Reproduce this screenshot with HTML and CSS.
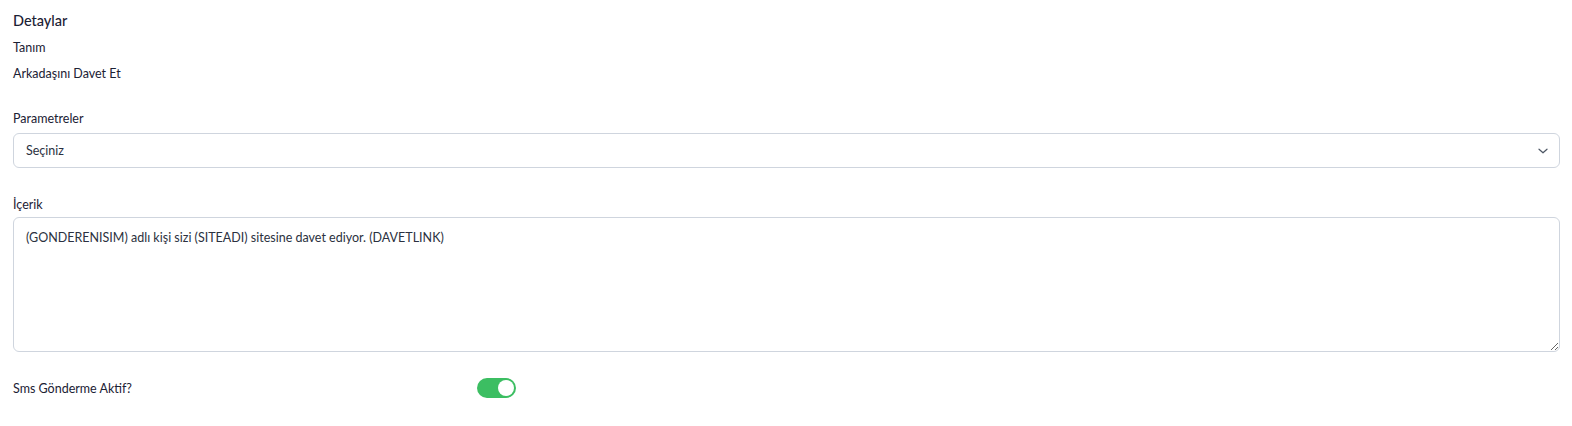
FILE: index.html
```html
<!DOCTYPE html>
<html lang="tr">
<head>
<meta charset="utf-8">
<title>Detaylar</title>
<link rel="stylesheet" href="styles.css">
</head>
<body>
<div class="page">
  <h2 class="title">Detaylar</h2>
  <div class="field-static">
    <div class="label">Tanım</div>
    <div class="value">Arkadaşını Davet Et</div>
  </div>
  <div class="field">
    <label class="label">Parametreler</label>
    <div class="select">
      <span>Seçiniz</span>
      <svg class="chev" width="12" height="12" viewBox="0 0 12 12"><path d="M2 4.2 L6 7.8 L10 4.2" fill="none" stroke="#4b5563" stroke-width="1.2" stroke-linecap="round" stroke-linejoin="round"/></svg>
    </div>
  </div>
  <div class="field field-text">
    <label class="label">İçerik</label>
    <textarea class="textarea">(GONDERENISIM) adlı kişi sizi (SITEADI) sitesine davet ediyor. (DAVETLINK)</textarea>
  </div>
  <div class="toggle-row">
    <span class="label">Sms Gönderme Aktif?</span>
    <span class="toggle"><span class="knob"></span></span>
  </div>
</div>
</body>
</html>
```

FILE: styles.css
```css
html, body {
  margin: 0;
  padding: 0;
  background: #ffffff;
}
body {
  font-family: Lato, "Noto Sans", sans-serif;
  color: #1b2134;
}
.page {
  padding: 11px 12px 0 13px;
  display: flex;
  flex-direction: column;
}
.title {
  margin: 0;
  font-size: 14.5px;
  font-weight: 500;
  line-height: 20px;
}
.field-static {
  display: flex;
  flex-direction: column;
  gap: 10px;
  margin-top: 9px;
}
.label {
  font-size: 12.5px;
  line-height: 16px;
  display: block;
}
.value {
  font-size: 12.5px;
  line-height: 16px;
}
.field {
  display: flex;
  flex-direction: column;
  gap: 6px;
  margin-top: 29px;
}
.field-text {
  margin-top: 29px;
  gap: 4px;
}
.select {
  height: 35px;
  box-sizing: border-box;
  border: 1px solid #cfd5de;
  border-radius: 6px;
  display: flex;
  align-items: center;
  justify-content: space-between;
  padding: 0 10px 0 12px;
  font-size: 12.5px;
  color: #2b3140;
}
.chev { display: block; }
.textarea {
  height: 135px;
  box-sizing: border-box;
  border: 1px solid #cfd5de;
  border-radius: 6px;
  padding: 11px 12px;
  font-family: inherit;
  font-size: 12.5px;
  line-height: 18px;
  color: #2b3140;
  resize: vertical;
  outline: none;
  margin: 0;
}
.toggle-row {
  display: flex;
  align-items: flex-start;
  margin-top: 25px;
}
.toggle-row .label {
  width: 464px;
  padding-top: 4px;
}
.toggle {
  width: 39px;
  height: 20px;
  border-radius: 10px;
  background: #3cbe62;
  display: flex;
  align-items: center;
  justify-content: flex-end;
  padding: 0 2px;
  box-sizing: border-box;
  margin-top: 1px;
}
.knob {
  width: 16px;
  height: 16px;
  border-radius: 50%;
  background: #fff;
}
```
